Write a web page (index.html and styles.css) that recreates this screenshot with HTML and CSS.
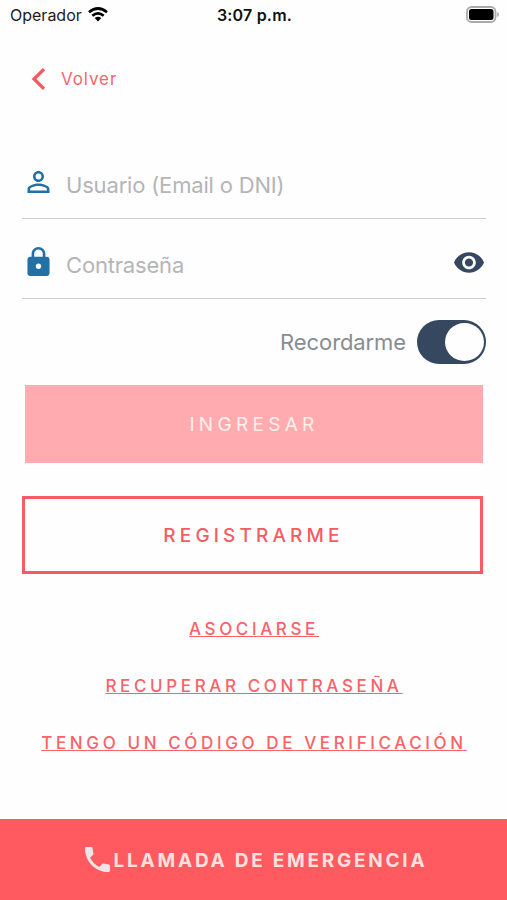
FILE: index.html
```html
<!DOCTYPE html>
<html lang="es">
<head>
<meta charset="utf-8">
<title>Ingresar</title>
<link rel="stylesheet" href="styles.css">
</head>
<body>
<header class="status">
  <div class="carrier"><span>Operador</span>
    <svg class="wifi" viewBox="0 0 20 15" fill="none" stroke="#000" stroke-width="2.7"><path d="M1 5.2Q10-2.2 19 5.2"/><path d="M4.3 8.7Q10 4.1 15.700 8.700"/><path d="M6.700 10.900Q10 8.400 13.300 10.900L10 14.400Z" fill="#000" stroke="none"/></svg>
  </div>
  <span class="time">3:07 p.m.</span>
  <div class="power"><svg class="battery" viewBox="0 0 34 17"><rect x="1" y="1" width="28.500" height="15" rx="4.500" fill="#fff" stroke="#aaa" stroke-width="1.800"/><rect x="3" y="3" width="24.500" height="11" rx="2.500"/><path d="M31.200 6v5q1.800-.7 1.800-2.500T31.200 6" fill="#aaa"/></svg></div>
</header>
<main class="page">
  <a class="back"><svg class="chevron" viewBox="0 0 13 22" fill="none" stroke="#f7575e" stroke-width="3.200"><path d="M12 1.200 2 11l10 9.800"/></svg><span>Volver</span></a>
  <form class="form">
    <div class="field">
      <svg class="user" viewBox="4 4 16 16" fill="#2370a4"><path d="M12 5.900a2.100 2.100 0 1 1 0 4.200 2.100 2.100 0 0 1 0-4.200m0 9c2.970 0 6.100 1.460 6.100 2.100v1.100H5.900V17c0-.64 3.130-2.100 6.100-2.100M12 4C9.790 4 8 5.790 8 8s1.790 4 4 4 4-1.790 4-4-1.790-4-4-4zm0 9c-2.670 0-8 1.340-8 4v3h16v-3c0-2.660-5.330-4-8-4z"/></svg>
      <span class="placeholder">Usuario (Email o DNI)</span>
    </div>
    <div class="field">
      <svg class="lock" viewBox="4 1 16 21" fill="#2370a4"><path d="M18 8h-1V6c0-2.760-2.240-5-5-5S7 3.240 7 6v2H6c-1.100 0-2 .9-2 2v10c0 1.100.9 2 2 2h12c1.100 0 2-.9 2-2V10c0-1.100-.9-2-2-2zm-6 9c-1.100 0-2-.9-2-2s.9-2 2-2 2 .9 2 2-.9 2-2 2zm3.100-9H8.900V6c0-1.710 1.390-3.100 3.100-3.100s3.100 1.390 3.100 3.100v2z"/></svg>
      <span class="placeholder">Contraseña</span>
      <svg class="eye" viewBox="1 4.500 22 15" fill="#354860"><path d="M12 4.500C7 4.500 2.730 7.610 1 12c1.730 4.390 6 7.500 11 7.500s9.270-3.110 11-7.500c-1.730-4.390-6-7.500-11-7.500zM12 17c-2.760 0-5-2.240-5-5s2.240-5 5-5 5 2.240 5 5-2.240 5-5 5zm0-8c-1.660 0-3 1.340-3 3s1.340 3 3 3 3-1.340 3-3-1.340-3-3-3z"/></svg>
    </div>
    <div class="remember"><span>Recordarme</span><div class="switch"><div class="knob"></div></div></div>
    <div class="button login"><span>INGRESAR</span></div>
    <div class="button register"><span>REGISTRARME</span></div>
  </form>
  <nav class="links">
    <a class="link join">ASOCIARSE</a>
    <a class="link recover">RECUPERAR CONTRASEÑA</a>
    <a class="link code">TENGO UN CÓDIGO DE VERIFICACIÓN</a>
  </nav>
</main>
<footer class="emergency">
  <svg class="phone" viewBox="3 3 18 18" fill="#ebe7e8"><path d="M6.620 10.790c1.440 2.830 3.760 5.140 6.590 6.590l2.200-2.200c.27-.27.67-.36 1.020-.24 1.120.37 2.330.57 3.570.57.55 0 1 .45 1 1V20c0 .55-.45 1-1 1-9.390 0-17-7.610-17-17 0-.55.45-1 1-1h3.500c.55 0 1 .45 1 1 0 1.250.2 2.450.57 3.570.11.35.03.74-.25 1.020l-2.200 2.200z"/></svg>
  <span class="call">LLAMADA DE EMERGENCIA</span>
</footer>
</body>
</html>
```
FILE: styles.css
```css
* { box-sizing: border-box; }
body {
  margin: 0;
  height: 900px;
  display: flex;
  flex-direction: column;
  background: #fefefe;
  font-family: Inter, sans-serif;
  overflow: hidden;
}
svg { display: block; flex: none; }
span, a { white-space: nowrap; }
.status {
  height: 30px;
  display: grid;
  grid-template-columns: 1fr auto 1fr;
  align-items: center;
  padding: 0 7px 0 10px;
  font-size: 16px;
  line-height: 20px;
  color: #1c1c1c;
}
.carrier { display: flex; align-items: center; gap: 6px; }
.wifi { width: 20px; height: 15px; margin-bottom: 2px; }
.time { font-weight: 600; color: #111; letter-spacing: .2px; margin-left: -1px; }
.power { display: flex; justify-content: flex-end; padding-bottom: 2px; }
.battery { width: 34px; height: 17px; }
.page { flex: 1; padding: 34px 21px 0 22px; }
.back {
  display: flex;
  align-items: center;
  gap: 16px;
  height: 30px;
  padding-left: 10px;
  font-size: 17px;
  letter-spacing: .9px;
  color: #f8666d;
}
.chevron { width: 13px; height: 22px; }
.form { padding-top: 44px; }
.field {
  height: 80px;
  display: flex;
  align-items: center;
  border-bottom: 1px solid #cfcfcf;
  padding: 13px 2px 0 5px;
}
.field:first-child { height: 81px; }
.user { width: 23px; height: 22px; margin-bottom: 5px; }
.lock { width: 23px; height: 29px; margin-bottom: 7px; }
.eye { width: 30px; height: 21px; margin: 0 0 6px auto; }
.placeholder {
  margin-left: 16px;
  font-size: 22px;
  letter-spacing: -.18px;
  color: #b5b5b7;
}
.remember {
  height: 86px;
  display: flex;
  align-items: center;
  justify-content: flex-end;
  gap: 11px;
  font-size: 22px;
  letter-spacing: -.1px;
  color: #888c91;
}
.switch {
  width: 69px;
  height: 44px;
  padding: 3px 2px;
  border-radius: 22px;
  background: #354860;
  display: flex;
  justify-content: flex-end;
}
.knob { width: 39px; height: 38px; border-radius: 50%; background: #fefefe; }
.button {
  height: 78px;
  display: flex;
  align-items: center;
  justify-content: center;
  font-size: 19px;
  font-weight: 500;
}
.login {
  margin: 0 3px;
  background: #ffabaf;
  color: #fff0ec;
  font-weight: 400;
  letter-spacing: 4.3px;
}
.register {
  margin: 33px 3px 0 0;
  padding-left: 2px;
  border: 3px solid #f85b62;
  color: #f35c62;
  letter-spacing: 4.15px;
}
.links {
  display: flex;
  flex-direction: column;
  align-items: center;
  gap: 33px;
  padding-top: 43px;
}
.link {
  height: 24px;
  line-height: 24px;
  font-size: 17px;
  font-weight: 500;
  letter-spacing: 3.62px;
  color: #f8636a;
  text-decoration: underline;
  text-decoration-thickness: 1px;
  text-underline-offset: 1px;
  text-decoration-skip-ink: none;
}
.emergency {
  height: 81px;
  display: flex;
  align-items: center;
  justify-content: center;
  gap: 4px;
  background: #ff5a60;
  color: #ffe1df;
  font-size: 19px;
  font-weight: 700;
  letter-spacing: 2.75px;
}
.phone { width: 25px; height: 25px; margin-left: 5px; }
.call { padding-top: 1px; }
```
